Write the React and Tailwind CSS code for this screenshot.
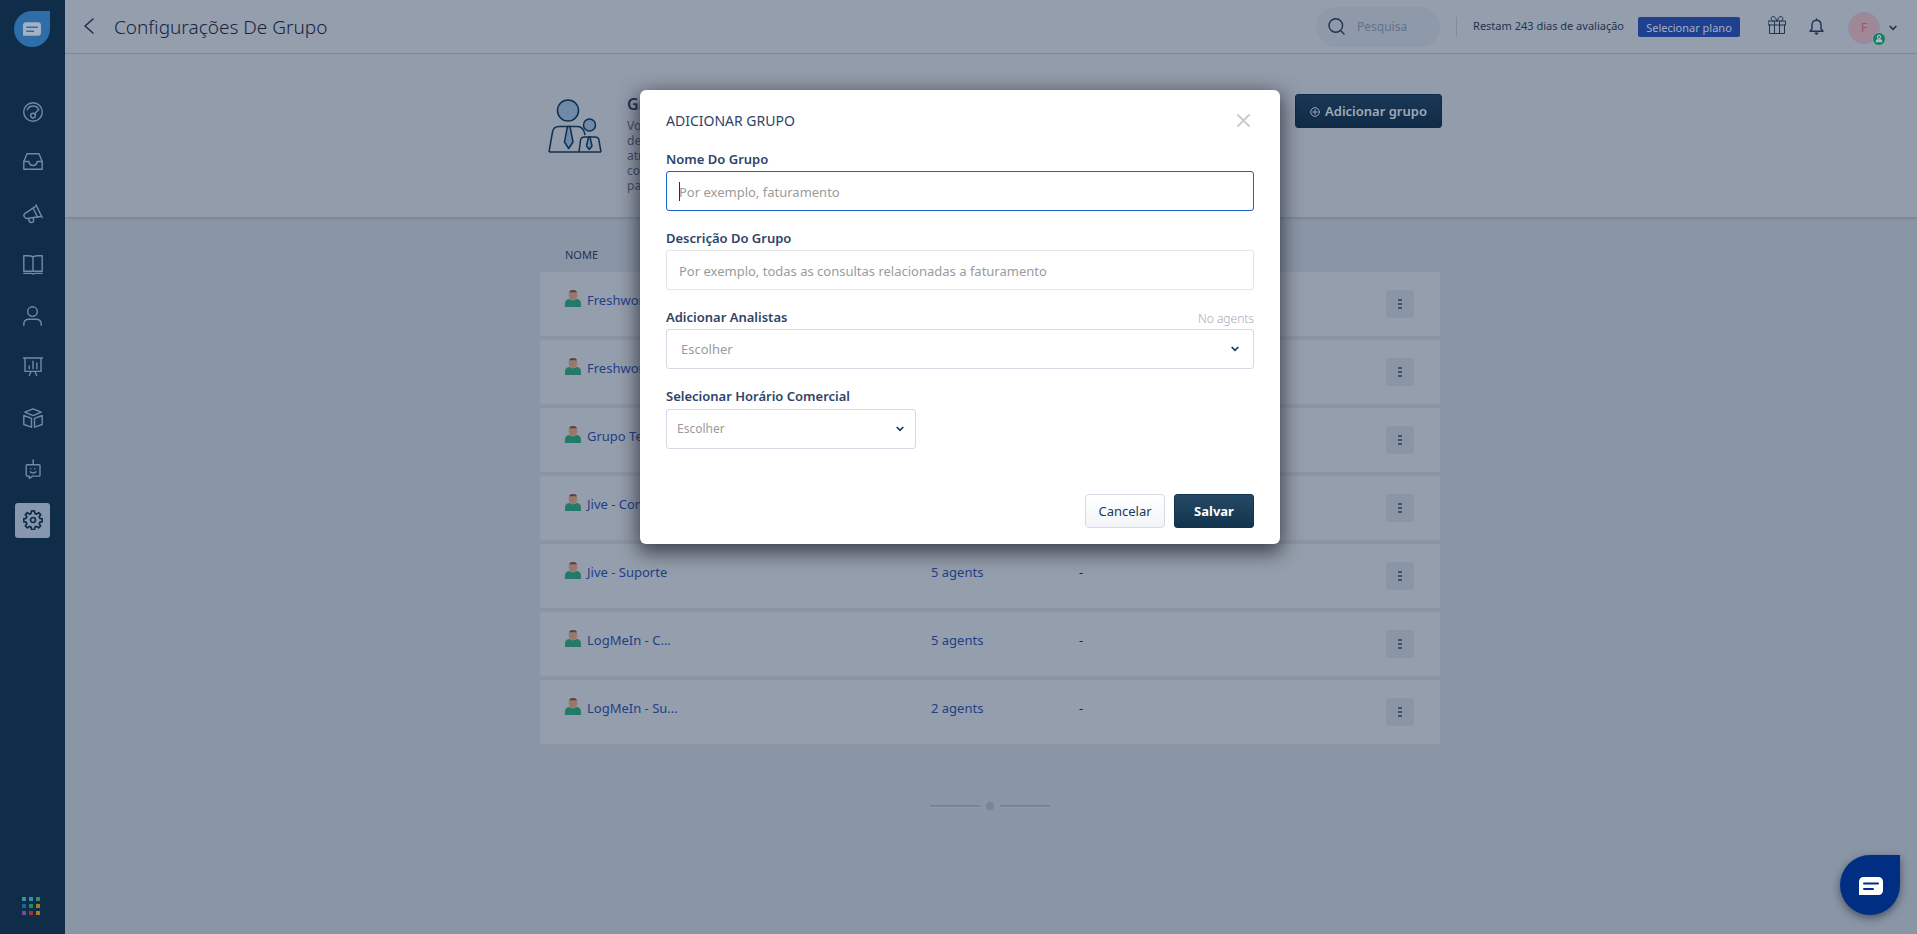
import React, { useState } from "react";

const groups = [
  { id: 1, name: "Freshworks - C...", agents: 5 },
  { id: 2, name: "Freshworks - S...", agents: 4 },
  { id: 3, name: "Grupo Teste", agents: 1 },
  { id: 4, name: "Jive - Comercial", agents: 4 },
  { id: 5, name: "Jive - Suporte", agents: 5 },
  { id: 6, name: "LogMeIn - C...", agents: 5 },
  { id: 7, name: "LogMeIn - Su...", agents: 2 },
];

const Icon = ({ children, className = "size-5", box = "0 0 20 20", stroke = "1.4" }) => (
  <svg
    viewBox={box}
    className={className}
    fill="none"
    stroke="currentColor"
    strokeWidth={stroke}
    strokeLinecap="round"
    strokeLinejoin="round"
    aria-hidden="true"
  >
    {children}
  </svg>
);

const navItems = [
  {
    label: "Painel",
    icon: (
      <>
        <circle cx="10" cy="10" r="9.3" />
        <path d="M4.200 7.800A6.400 6.400 0 0 1 15.800 7.600M11.500 12l4-4.300" />
        <circle cx="10" cy="13.600" r="2.400" />
      </>
    ),
  },
  {
    label: "Caixa de entrada",
    icon: (
      <>
        <path d="M.8 8.500 4 .8h12l3.200 7.700v7.700H.8z" />
        <path d="M.8 8.500h5c.5 2.600 2 4 4.200 4s3.700-1.400 4.200-4h5" />
      </>
    ),
  },
  {
    label: "Campanhas",
    icon: (
      <>
        <path d="M13 .9 19.200 13.600M12.200 2.600 1.800 9.600c-1.300 1-1 2.200-.5 3.200s1.400 1.900 2.700 1.700l13.700-2" />
        <path d="M10.200 4.200l4.300 8.900M5.600 14.800c.3 2.300 1.200 3.700 2.800 3.700s2.500-1.200 2.300-2.600l-.7-1.700" />
      </>
    ),
  },
  {
    label: "Perguntas frequentes",
    icon: (
      <>
        <path d="M10 1.800C8.500.8 6.500.8 4.500.8H.8v15.400h9.200zM10 1.800c1.500-1 3.500-1 5.500-1h3.700v15.400H10z" />
        <path d="M.8 18.400h7.700l1.500.7 1.500-.7h7.700" />
      </>
    ),
  },
  {
    label: "Contatos",
    icon: (
      <>
        <circle cx="9.500" cy="5.600" r="4.800" />
        <path d="M.8 19.200v-.9c0-3 2-5 5.200-5h7c3.200 0 5.200 2 5.200 5v.9" />
      </>
    ),
  },
  {
    label: "Relatórios",
    icon: (
      <>
        <path d="M.6 1h18.800M2 1v13.400h16V1M8 14.600l-1.600 4M12 14.600l1.600 4" />
        <path d="M6.200 8.900v2.800M10 4.300v7.400M13.900 6v5.700" />
      </>
    ),
  },
  {
    label: "Aplicativos",
    icon: (
      <>
        <path d="M10 .8l8.200 3.400L10 7.600 1.800 4.200zM.8 7.500l7.700 2.900v8.800L.8 16.500zM19.200 7.500l-7.700 2.900v8.800l7.700-2.700z" />
      </>
    ),
  },
  {
    label: "Bots",
    icon: (
      <>
        <path d="M10.200 1.500v4M4 5.700h12.200c.5 0 .8.300.8.800v9.800c0 .5-.3.800-.8.800H9.500l-3.300 2.400.2-2.400H4c-.5 0-.8-.3-.8-.8V6.500c0-.5.300-.8.800-.8z" />
        <path d="M7.200 12.800c1.500 1.500 4.300 1.500 5.800 0M7.800 9.700v.2M11.800 9.700v.2M10.200.9v.4" />
      </>
    ),
  },
  {
    label: "Configurações",
    active: true,
    icon: (
      <>
        <path
          strokeWidth="1.700"
          d="M8.600.9h2.800l.5 2.500 1.600.7 2.100-1.400 2 2-1.400 2.100.7 1.600 2.400.4v2.800l-2.400.5-.7 1.600 1.400 2.100-2 2-2.100-1.400-1.600.7-.5 2.400H8.600l-.5-2.400-1.600-.7-2.100 1.400-2-2 1.400-2.100-.7-1.600-2.400-.5V8.800l2.400-.4.700-1.600-1.400-2.100 2-2 2.100 1.400 1.600-.7z"
        />
        <circle cx="10" cy="10" r="2.500" strokeWidth="1.700" />
      </>
    ),
  },
];

const appDots = [
  "bg-[#3b9489]",
  "bg-[#3191ad]",
  "bg-[#3c8a66]",
  "bg-[#205f9b]",
  "bg-[#238a5b]",
  "bg-[#a07c22]",
  "bg-[#744f8f]",
  "bg-[#98353f]",
  "bg-[#a07c22]",
];

const Chevron = ({ className }) => (
  <svg viewBox="0 0 8 6" className={className} fill="none" stroke="currentColor" strokeWidth="1.700" aria-hidden="true">
    <path d="M.7 1 4 4.300 7.300 1" />
  </svg>
);

const ChatGlyph = ({ className, line }) => (
  <svg viewBox="0 0 24 18" className={className} aria-hidden="true">
    <path d="M4.500 0h15A4.500 4.500 0 0 1 24 4.500v9a4.500 4.500 0 0 1-4.500 4.500H0V4.500A4.500 4.500 0 0 1 4.500 0z" fill="currentColor" />
    <path d="M5 6.500h14M5 12h9" stroke={line} strokeWidth="2" strokeLinecap="round" />
  </svg>
);

const AgentAvatar = () => (
  <svg viewBox="0 0 16 17" className="mt-[18px] h-[17px] w-4 shrink-0" aria-hidden="true">
    <path d="M3.700 5c0-3.300 1.500-4.900 4.300-4.900S12.300 1.700 12.300 5c0 3-1.600 5.200-4.300 5.200S3.700 8 3.700 5z" fill="#97796b" />
    <path d="M4 2.300C4.600.7 6 0 8 0s3.400.7 4 2.300z" fill="#59414a" />
    <path d="M0 17v-3.500C0 10.500 2 9 4.700 9c1 1 2 1.400 3.300 1.400S10.300 10 11.300 9C14 9 16 10.500 16 13.500V17z" fill="#237a68" />
  </svg>
);

const Sidebar = () => (
  <aside className="flex w-[65px] shrink-0 flex-col items-center bg-[#0f2c48]">
    <a
      href="#inicio"
      aria-label="Início"
      className="mt-[11px] mr-px flex size-9 items-center justify-center rounded-full rounded-tr-[5px] bg-[#2e6da8]"
    >
      <ChatGlyph className="h-[14px] w-[18px] text-[#a3b1c4]" line="#2e6da8" />
    </a>
    <nav className="mt-12 flex flex-col gap-4">
      {navItems.map((item) => (
        <a
          key={item.label}
          href="#menu"
          aria-label={item.label}
          className={
            item.active
              ? "size-[35px] rounded-[3px] bg-[#8797ad] pt-[7px] pl-2 text-[#0f2c48]"
              : "size-[35px] pt-[7px] pl-2 text-[#7189aa]"
          }
        >
          <Icon>{item.icon}</Icon>
        </a>
      ))}
    </nav>
    <button
      type="button"
      aria-label="Aplicativos Freshworks"
      className="mt-auto mr-[3px] mb-[19px] grid grid-cols-3 gap-[3px]"
    >
      {appDots.map((color, i) => (
        <span key={i} className={`size-1 ${color}`}></span>
      ))}
    </button>
  </aside>
);

const Header = () => (
  <header className="flex h-[54px] shrink-0 items-center border-b border-[#818c9c] bg-[#959eac] pr-5">
    <button type="button" aria-label="Voltar" className="ml-[19px] pb-0.5 text-[#1a2c4a]">
      <Icon className="h-4 w-[10px]" box="0 0 10 16">
        <path d="M9 .9 1 8l8 7.100" />
      </Icon>
    </button>
    <h1 className="ml-5 text-[19px] leading-6 font-light text-[#142542]">Configurações De Grupo</h1>
    <label className="ml-auto flex h-10 w-[124px] items-center gap-3 rounded-full bg-[#8e99aa] pl-3">
      <Icon className="size-[17px] shrink-0 text-[#1f3353]" box="0 0 17 17">
        <circle cx="7.800" cy="7.500" r="6.800" />
        <path d="M12.500 12.500l3.500 3.500" />
      </Icon>
      <input type="search" aria-label="Pesquisa" placeholder="Pesquisa" className="w-20 text-[12px] placeholder:text-[#65738b]" />
    </label>
    <span className="ml-4 h-5 w-px bg-[#808b9c]"></span>
    <span className="ml-4 text-[11px] text-[#1f3353]">Restam 243 dias de avaliação</span>
    <button type="button" className="ml-[14px] h-5 w-[102px] rounded-[2px] bg-[#1e408f] pt-0.5 text-[11px] leading-4 text-[#a5b0c6]">
      Selecionar plano
    </button>
    <button type="button" aria-label="Novidades" className="ml-7 pb-[3px] text-[#1f3353]">
      <Icon className="size-[18px]" box="0 0 18 18" stroke="1">
        <path d="M.5 5h17v4H.5zM1.500 9v8.500h15V9M6.500 5v12.500M11.500 5v12.500M9 5C8 2 6.500.5 5 .5 2.800.5 2.500 4 4.500 5M9 5c1-3 2.500-4.500 4-4.500 2.200 0 2.500 3.500.5 4.500" />
      </Icon>
    </button>
    <button type="button" aria-label="Notificações" className="ml-[23px] text-[#1f3353]">
      <Icon className="h-[17px] w-[15px]" box="0 0 15 17">
        <path d="M1 13.300h13l-2-2.500V7c0-3-1.800-4.800-4.500-4.800S3 4 3 7v3.800zM7.500 2.200V.9" />
        <path d="M6.300 15.300h2.400l-1.200.8z" fill="currentColor" />
      </Icon>
    </button>
    <button type="button" aria-label="Perfil" className="ml-6 flex items-center gap-[9px] pt-0.5">
      <span className="relative flex size-8 items-center justify-center rounded-full border border-[#8a93ab] bg-[#9f8796] text-[12px] text-[#a35265]">
        F
        <svg viewBox="0 0 14 14" className="absolute -right-[7px] -bottom-[3px] size-[14px]" aria-hidden="true">
          <circle cx="7" cy="7" r="6.500" fill="#1f7a66" stroke="#93a8ad" />
          <circle cx="7" cy="5" r="1.600" fill="none" stroke="#a9bfc0" strokeWidth="1.100" />
          <path d="M3.800 10.300V9c0-1 .7-1.700 1.700-1.700h3c1 0 1.700.7 1.700 1.700v1.300z" fill="#a9bfc0" />
        </svg>
      </span>
      <Chevron className="h-[6px] w-2 text-[#1f3353]" />
    </button>
  </header>
);

const Intro = () => (
  <section className="h-[163px] shrink-0 bg-[#939cab] pr-0.5 shadow-[0_1px_3px_rgba(60,75,95,0.3)]">
    <div className="mx-auto flex max-w-[900px] items-start pt-10">
      <svg
        viewBox="0 0 54 54"
        className="mt-[5px] ml-2 size-[54px] shrink-0"
        fill="none"
        stroke="#10304f"
        strokeWidth="1.500"
        strokeLinejoin="round"
        aria-hidden="true"
      >
        <circle cx="20" cy="11.500" r="10.500" fill="#7089a9" />
        <circle cx="41.500" cy="26" r="6" fill="#7089a9" />
        <path d="M1 53l3.500-20C5.200 29 7.500 27.500 11 27.500h18.500c4 0 6.500 3 7.500 8.500M1 53h52" />
        <path d="M31 53l1.500-11.500c.4-2.500 1.800-3.500 4-3.500H47c2.300 0 3.700 1 4 3.500L53 53" />
        <path d="M19.500 27.500h2.500L25 43l-4.300 6.500L16.500 43z" fill="#7089a9" />
        <path d="M40.500 38h1.500l2 9-2.700 3.500-2.800-3.500z" fill="#7089a9" />
      </svg>
      <div className="ml-[25px] w-[560px]">
        <h2 className="text-[16px] leading-5 font-semibold text-[#1f3353]">Grupos</h2>
        <p className="mt-1 text-[12px] leading-[15px] text-[#3e4f6b]">
          Você pode organizar os analistas em grupos
          <br />
          de acordo com a função de cada equipe e
          <br />
          atribuir conversas ao grupo certo, para que
          <br />
          conversas novas cheguem sempre à pessoa certa
          <br />
          para atender.
        </p>
      </div>
      <button
        type="button"
        className="-mr-0.5 ml-auto flex h-[34px] w-[147px] items-center justify-center gap-[5px] rounded-[3px] border border-[#102b46] bg-linear-to-b from-[#193756] to-[#102b46] pt-0.5 text-[13px] font-semibold text-[#a0abb9]"
      >
        <Icon className="size-[10px]" box="0 0 10 10" stroke="1">
          <circle cx="5" cy="5" r="4.300" />
          <path d="M5 2.800v4.400M2.800 5h4.400" />
        </Icon>
        Adicionar grupo
      </button>
    </div>
  </section>
);

const GroupTable = () => (
  <section className="flex-1 pr-0.5">
    <table className="mx-auto mt-[29px] block w-full max-w-[900px] text-left text-[13px]">
      <thead className="block">
        <tr className="flex h-[26px] pl-[25px]">
          <th className="text-[11px] leading-[18px] font-normal text-[#1f3353]">NOME</th>
        </tr>
      </thead>
      <tbody className="flex flex-col gap-1">
        {groups.map((group) => (
          <tr key={group.id} className="flex h-16 rounded-[3px] bg-[#959eac] pr-[26px] pl-[25px]">
            <td className="flex w-[366px] gap-[6px]">
              <AgentAvatar />
              <a href="#grupo" className="mt-[18px] leading-5 text-[#213f87]">
                {group.name}
              </a>
            </td>
            <td className="w-[148px] pt-[18px] leading-5">
              <a href="#analistas" className="text-[#213f87]">
                {group.agents} agents
              </a>
            </td>
            <td className="pt-[18px] leading-5 text-[#1a2c4a]">-</td>
            <td className="ml-auto pt-[18px]">
              <button
                type="button"
                aria-label={`Opções de ${group.name}`}
                className="flex size-7 flex-col items-center justify-center gap-[2px] rounded-[3px] bg-[#8a96a6]"
              >
                <span className="h-[2px] w-1 bg-[#435062]"></span>
                <span className="h-[2px] w-1 bg-[#435062]"></span>
                <span className="h-[2px] w-1 bg-[#435062]"></span>
              </button>
            </td>
          </tr>
        ))}
      </tbody>
    </table>
    <div className="mt-[58px] flex items-center justify-center gap-[6px]">
      <span className="h-[3px] w-[50px] border-b border-[#919dae] bg-[#77849a]"></span>
      <span className="size-2 rounded-full bg-[#77849a]"></span>
      <span className="h-[3px] w-[50px] border-b border-[#919dae] bg-[#77849a]"></span>
    </div>
  </section>
);

const labelStyle = "text-[13px] leading-5 font-semibold text-[#2f4468]";

const AddGroupModal = () => {
  const [name, setName] = useState("");
  const [description, setDescription] = useState("");

  return (
    <div className="absolute inset-0 flex items-start justify-center pt-[90px] pl-[3px]">
      <form
        role="dialog"
        aria-label="Adicionar grupo"
        onSubmit={(e) => e.preventDefault()}
        className="w-[640px] rounded-md bg-white px-[26px] pt-5 pb-4 shadow-[0_6px_20px_2px_rgba(20,22,30,0.7)]"
      >
        <div className="flex h-[22px] items-center justify-between">
          <h2 className="pb-0.5 text-[14px] text-[#2f4468]">ADICIONAR GRUPO</h2>
          <button type="button" aria-label="Fechar" className="mr-1 pb-0.5 text-[#c9cacc]">
            <Icon className="size-[13px]" box="0 0 13 13" stroke="1.800">
              <path d="M1 1l11 11M12 1 1 12" />
            </Icon>
          </button>
        </div>

        <div className="mt-[17px] flex flex-col gap-[17px]">
          <div className="flex flex-col gap-[2px]">
            <label htmlFor="name" className={labelStyle}>
              Nome Do Grupo
            </label>
            <div className="relative">
              <input
                id="name"
                value={name}
                onChange={(e) => setName(e.target.value)}
                placeholder="Por exemplo, faturamento"
                className="h-10 w-full rounded-[3px] border border-[#1b63c4] px-3 pt-0.5 text-[13px] text-[#2f4468] outline-none placeholder:text-[#9b9b9b]"
              />
              <span className="absolute top-[11px] left-[13px] h-[19px] w-px bg-[#1f3353]"></span>
            </div>
          </div>

          <div className="flex flex-col gap-[2px]">
            <label htmlFor="description" className={labelStyle}>
              Descrição Do Grupo
            </label>
            <input
              id="description"
              value={description}
              onChange={(e) => setDescription(e.target.value)}
              placeholder="Por exemplo, todas as consultas relacionadas a faturamento"
              className="h-10 w-full rounded-[3px] border border-[#e3e5e9] px-3 pt-0.5 text-[13px] text-[#2f4468] outline-none placeholder:text-[#9b9b9b]"
            />
          </div>

          <div className="flex flex-col gap-[2px]">
            <div className="flex justify-between">
              <label htmlFor="agents" className={labelStyle}>
                Adicionar Analistas
              </label>
              <span className="pt-1 text-[12px] leading-4 font-light text-[#a3abb9]">No agents</span>
            </div>
            <div className="relative">
              <select
                id="agents"
                className="h-10 w-full appearance-none rounded-[3px] border border-[#d5dae4] px-[14px] pt-0.5 text-[13px] text-[#9b9b9b]"
              >
                <option>Escolher</option>
              </select>
              <Chevron className="pointer-events-none absolute top-[17px] right-[15px] h-[6px] w-2 text-[#1b3a57]" />
            </div>
          </div>

          <div className="flex w-[250px] flex-col gap-[3px]">
            <label htmlFor="hours" className={labelStyle}>
              Selecionar Horário Comercial
            </label>
            <div className="relative">
              <select
                id="hours"
                className="h-10 w-full appearance-none rounded-[3px] border border-[#d5dae4] px-[10px] text-[12px] text-[#9b9b9b]"
              >
                <option>Escolher</option>
              </select>
              <Chevron className="pointer-events-none absolute top-[17px] right-3 h-[6px] w-2 text-[#1b3a57]" />
            </div>
          </div>
        </div>

        <div className="mt-[45px] flex justify-end gap-[9px]">
          <button
            type="button"
            className="h-[34px] w-20 rounded-[4px] border border-[#d5dce6] bg-linear-to-b from-white to-[#f3f5f8] pt-0.5 text-[13px] text-[#1b3a57]"
          >
            Cancelar
          </button>
          <button
            type="submit"
            className="h-[34px] w-20 rounded-[3px] border border-[#12344d] bg-linear-to-b from-[#264966] to-[#12344d] pt-0.5 text-[13px] font-bold text-white"
          >
            Salvar
          </button>
        </div>
      </form>
    </div>
  );
};

const App = () => {
  return (
    <div className="relative flex h-screen overflow-hidden bg-[#8a96a6] font-['Noto_Sans','Open_Sans',sans-serif]">
      <Sidebar />
      <main className="flex min-w-0 flex-1 flex-col">
        <Header />
        <Intro />
        <GroupTable />
      </main>
      <AddGroupModal />
      <button
        type="button"
        aria-label="Abrir chat"
        className="absolute right-[17px] bottom-[19px] flex size-[60px] items-center justify-center rounded-full rounded-tr-[6px] bg-[#002e83] shadow-[0_3px_8px_rgba(30,35,50,0.6)]"
      >
        <ChatGlyph className="mt-0.5 ml-0.5 h-[18px] w-6 text-white" line="#002e83" />
      </button>
    </div>
  );
};

export default App;
